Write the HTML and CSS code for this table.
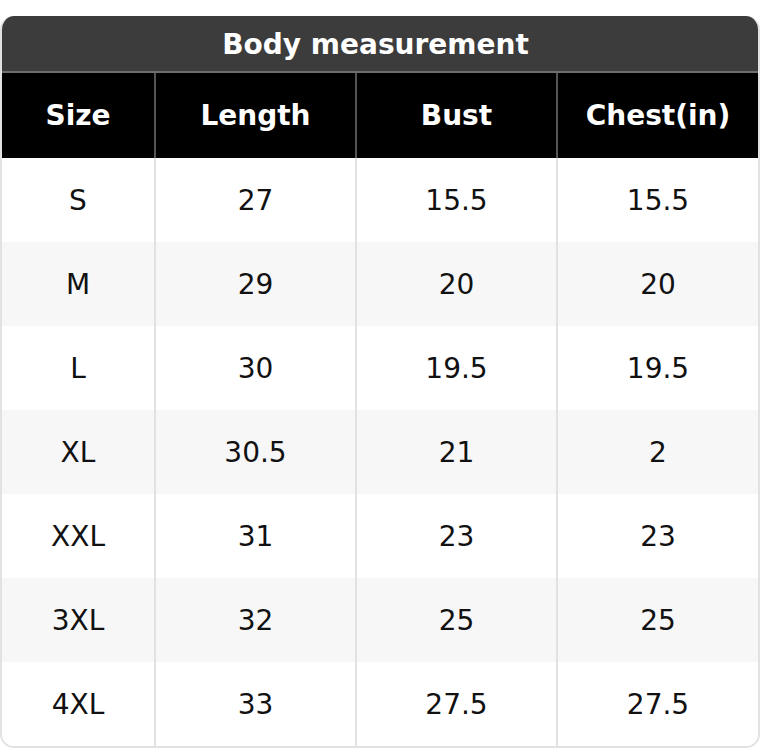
FILE: index.html
```html
<!DOCTYPE html>
<html>
<head>
<meta charset="utf-8">
<link rel="stylesheet" href="styles.css">
</head>
<body>
<div class="card">
  <div class="title">Body measurement</div>
  <div class="grid">
    <div class="h">Size</div><div class="h">Length</div><div class="h">Bust</div><div class="h">Chest(in)</div>
    <div class="c">S</div><div class="c">27</div><div class="c">15.5</div><div class="c">15.5</div>
    <div class="c alt">M</div><div class="c alt">29</div><div class="c alt">20</div><div class="c alt">20</div>
    <div class="c">L</div><div class="c">30</div><div class="c">19.5</div><div class="c">19.5</div>
    <div class="c alt">XL</div><div class="c alt">30.5</div><div class="c alt">21</div><div class="c alt">2</div>
    <div class="c">XXL</div><div class="c">31</div><div class="c">23</div><div class="c">23</div>
    <div class="c alt">3XL</div><div class="c alt">32</div><div class="c alt">25</div><div class="c alt">25</div>
    <div class="c">4XL</div><div class="c">33</div><div class="c">27.5</div><div class="c">27.5</div>
  </div>
</div>
</body>
</html>
```
FILE: styles.css
```css
html, body { margin: 0; padding: 0; background: #fff; }
body { padding-top: 16px; font-family: "DejaVu Sans", sans-serif; }
.card {
  width: 760px;
  box-sizing: border-box;
  border: 2px solid #e2e2e2;
  border-top: none;
  border-radius: 14px;
  overflow: hidden;
}
.title {
  height: 57px;
  margin: 0 -2px;
  background: #3c3c3c;
  color: #fff;
  font-weight: bold;
  font-size: 28px;
  display: flex;
  align-items: center;
  justify-content: center;
  border-bottom: 2px solid #6e6e6e;
  box-sizing: border-box;
  padding: 1px 9px 0 0;
}
.grid {
  display: grid;
  grid-template-columns: 152px 201px 201px 202px;
  grid-template-rows: 85px;
  grid-auto-rows: 84px;
}
.h, .c {
  display: flex;
  align-items: center;
  justify-content: center;
  font-size: 28px;
  box-sizing: border-box;
}
.h {
  background: #000;
  color: #fff;
  font-weight: bold;
  border-left: 2px solid #555;
}
.c {
  color: #111;
  background: #fff;
  border-left: 2px solid #e2e2e2;
}
.h:nth-child(4n+1), .c:nth-child(4n+1) { border-left: none; }
.c.alt { background: #f7f7f7; }
```
